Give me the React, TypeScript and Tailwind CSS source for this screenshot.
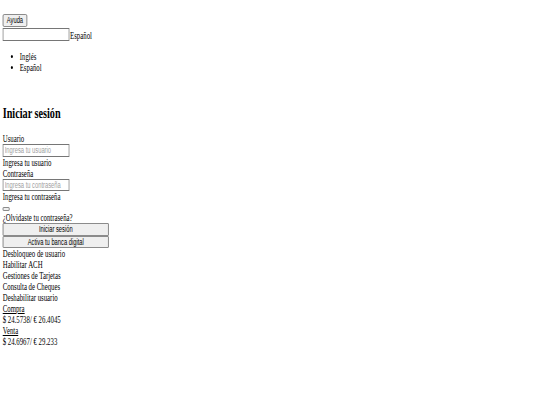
export default function App() {
  return (
    <div className="min-h-[405px] bg-white">
      <div className="origin-top-left scale-x-[0.68] pl-[4px] pt-[14px] font-['Liberation_Serif',serif] text-[10px] leading-[11px] text-black">
        <button className="block h-[13px] rounded-[2px] border border-[#767676] bg-[#efefef] px-[5px] font-['Liberation_Sans',sans-serif] text-[8.5px] leading-[11px]">
          Ayuda
        </button>
        <div className="mt-[1px] flex items-center">
          <input className="h-[13px] w-[98px] border border-[#767676] bg-white" />
          <span className="ml-[1px] mt-[1px]">Español</span>
        </div>

        <ul className="mt-[10px] list-disc pl-[25px]">
          <li>Inglés</li>
          <li>Español</li>
        </ul>

        <h2 className="mt-[32px] text-[15px] font-bold leading-[16px]">Iniciar sesión</h2>

        <div className="mt-[12px]">
          <div>Usuario</div>
          <input
            placeholder="Ingresa tu usuario"
            className="block h-[12.5px] w-[98px] border border-[#767676] px-[2px] font-['Liberation_Sans',sans-serif] text-[8.5px] placeholder:text-[#a0a0a0]"
          />
          <div>Ingresa tu usuario</div>
          <div>Contraseña</div>
          <input
            type="password"
            placeholder="Ingresa tu contraseña"
            className="block h-[12.5px] w-[98px] border border-[#767676] px-[2px] font-['Liberation_Sans',sans-serif] text-[8.5px] placeholder:text-[#a0a0a0]"
          />
          <div>Ingresa tu contraseña</div>
        </div>

        <div className="mt-[5px] h-[4px] w-[10px] rounded-[1px] border border-[#767676] bg-[#efefef]" />
        <div className="mt-[1px]">¿Olvidaste tu contraseña?</div>
        <button className="block h-[12.5px] w-[156px] rounded-[1px] border border-[#767676] bg-[#efefef] font-['Liberation_Sans',sans-serif] text-[8.5px] leading-[10px]">
          Iniciar sesión
        </button>
        <button className="block h-[12.5px] w-[156px] rounded-[1px] border border-[#767676] bg-[#efefef] font-['Liberation_Sans',sans-serif] text-[8.5px] leading-[10px]">
          Activa tu banca digital
        </button>

        <div>
          <div>Desbloqueo de usuario</div>
          <div>Habilitar ACH</div>
          <div>Gestiones de Tarjetas</div>
          <div>Consulta de Cheques</div>
          <div>Deshabilitar usuario</div>
          <div className="underline">Compra</div>
          <div>$ 24.5738/ € 26.4045</div>
          <div className="underline">Venta</div>
          <div>$ 24.6967/ € 29.233</div>
        </div>
      </div>
    </div>
  );
}
